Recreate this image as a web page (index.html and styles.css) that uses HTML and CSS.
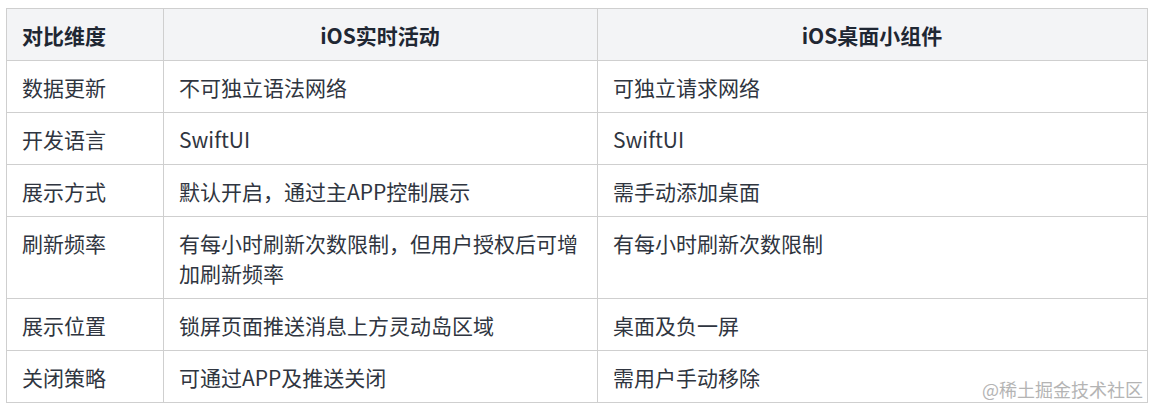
FILE: index.html
```html
<!DOCTYPE html>
<html lang="zh-CN">
<head>
<meta charset="utf-8">
<title>对比</title>
<link rel="stylesheet" href="styles.css">
</head>
<body>
<div class="wrap">
  <table class="cmp">
    <colgroup>
      <col class="c1"><col class="c2"><col class="c3">
    </colgroup>
    <thead>
      <tr><th class="left">对比维度</th><th>iOS实时活动</th><th>iOS桌面小组件</th></tr>
    </thead>
    <tbody>
      <tr><td>数据更新</td><td>不可独立语法网络</td><td>可独立请求网络</td></tr>
      <tr><td>开发语言</td><td>SwiftUI</td><td>SwiftUI</td></tr>
      <tr><td>展示方式</td><td>默认开启，通过主APP控制展示</td><td>需手动添加桌面</td></tr>
      <tr><td>刷新频率</td><td>有每小时刷新次数限制，但用户授权后可增加刷新频率</td><td>有每小时刷新次数限制</td></tr>
      <tr><td>展示位置</td><td>锁屏页面推送消息上方灵动岛区域</td><td>桌面及负一屏</td></tr>
      <tr><td>关闭策略</td><td>可通过APP及推送关闭</td><td>需用户手动移除</td></tr>
    </tbody>
  </table>
  <div class="mark">@稀土掘金技术社区</div>
</div>
</body>
</html>
```

FILE: styles.css
```css
html, body {
  margin: 0;
  padding: 0;
  background: #ffffff;
}
body {
  font-family: "Noto Sans CJK SC", "Noto Sans", sans-serif;
  color: #2b2f36;
}
.wrap {
  position: relative;
  width: 1141px;
  margin: 8px 0 0 6px;
}
.cmp {
  width: 1141px;
  border-collapse: collapse;
  table-layout: fixed;
  font-size: 21px;
  line-height: 30px;
}
.c1 { width: 157px; }
.c2 { width: 434px; }
.c3 { width: 550px; }
.cmp th, .cmp td {
  border: 1px solid #cfcfcf;
  padding: 11px 16px 10px 15px;
  vertical-align: top;
  text-align: left;
}
.cmp th {
  background: #f3f4f6;
  font-weight: 700;
  color: #1f2733;
  text-align: center;
}
.cmp th.left {
  text-align: left;
}
.cmp td {
  font-weight: 400;
  color: #2f3540;
}
.mark {
  position: absolute;
  right: 4px;
  bottom: 2px;
  font-size: 18px;
  line-height: 24px;
  color: #a8a8a8;
  opacity: 0.85;
}
```
